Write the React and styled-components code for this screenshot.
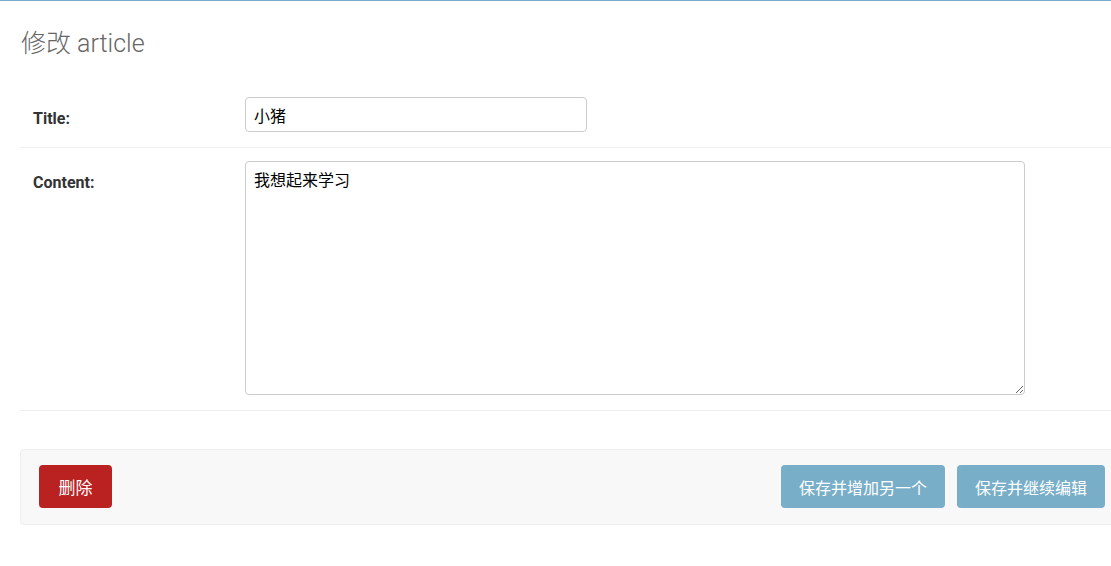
import styled, { createGlobalStyle } from "styled-components";

const GlobalStyle = createGlobalStyle`
  html, body {
    margin: 0;
    padding: 0;
    overflow: hidden;
    background: #fff;
  }
  body {
    font-family: Roboto, "Noto Sans CJK SC", "Liberation Sans", sans-serif;
    color: #333;
  }
`;

const Page = styled.div`
  width: 1144px;
  border-top: 1px solid #79aec8;
`;

const Content = styled.div`
  padding: 28px 20px 40px;
`;

const Heading = styled.h1`
  margin: 0 0 26px 1px;
  font-size: 25px;
  line-height: 29px;
  font-weight: 300;
  color: #666;
`;

const Row = styled.div`
  display: grid;
  grid-template-columns: 212px 1fr;
  align-items: start;
  padding: 13px 13px 15px;
  border-bottom: 1px solid #eee;
`;

const Label = styled.label`
  padding-top: 12px;
  font-size: 16px;
  line-height: 20px;
  font-weight: 700;
  color: #333;
`;

const fieldBase = `
  display: block;
  box-sizing: border-box;
  border: 1px solid #ccc;
  border-radius: 4px;
  padding: 6px 8px;
  font-family: "Noto Sans CJK SC", "Liberation Sans", sans-serif;
  font-size: 16px;
  line-height: 22px;
  color: #000;
  background: #fff;
  margin: 0;
  outline: none;
`;

const TextInput = styled.input`
  ${fieldBase}
  width: 342px;
  height: 35px;
`;

const TextArea = styled.textarea`
  ${fieldBase}
  width: 780px;
  height: 234px;
  resize: both;
`;

const SubmitRow = styled.div`
  display: flex;
  align-items: center;
  gap: 12px;
  margin-top: 38px;
  padding: 15px 18px 16px;
  background: #f8f8f8;
  border: 1px solid #eee;
  border-radius: 4px;
`;

const Button = styled.button`
  height: 43px;
  padding: 0 ${(p) => (p.$wide ? 19.5 : 18)}px;
  border: none;
  border-radius: 4px;
  background: ${(p) => p.$bg};
  color: #fff;
  font-family: "Noto Sans CJK SC", Roboto, sans-serif;
  font-size: ${(p) => p.$size || 16}px;
  cursor: pointer;
`;

const Spacer = styled.div`
  flex: 1;
`;

export default function App() {
  return (
    <Page>
      <GlobalStyle />
      <Content>
        <Heading>修改 article</Heading>
        <form onSubmit={(e) => e.preventDefault()}>
          <Row>
            <Label htmlFor="id_title">Title:</Label>
            <TextInput id="id_title" defaultValue="小猪" />
          </Row>
          <Row>
            <Label htmlFor="id_content">Content:</Label>
            <TextArea id="id_content" defaultValue="我想起来学习" />
          </Row>
          <SubmitRow>
            <Button type="button" $bg="#ba2121" $size={17} $wide>
              删除
            </Button>
            <Spacer />
            <Button type="submit" $bg="#79aec8">保存并增加另一个</Button>
            <Button type="submit" $bg="#79aec8">保存并继续编辑</Button>
          </SubmitRow>
        </form>
      </Content>
    </Page>
  );
}
